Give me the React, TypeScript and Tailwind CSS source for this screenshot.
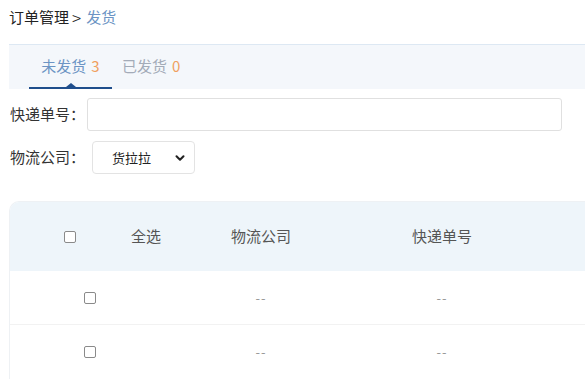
import { ChevronDown } from 'lucide-react';

const rows = [
  { id: 1, company: '--', trackingNo: '--' },
  { id: 2, company: '--', trackingNo: '--' },
];

function Box() {
  return <span className="block h-[12px] w-[12px] rounded-[2px] border border-[#8a8a8a] bg-white" />;
}

export default function App() {
  return (
    <div
      className="h-[379px] w-[585px] overflow-hidden bg-white text-[15px] text-[#333]"
      style={{ fontFamily: '"Microsoft YaHei", "Noto Sans CJK SC", sans-serif' }}
    >
      <div className="flex h-[35px] items-center pl-[9px]">
        <span className="text-[#222]">订单管理</span>
        <span className="ml-[3px] mr-[5px] text-[17px] font-light leading-none text-[#222]">&gt;</span>
        <span className="text-[#6c94c4]">发货</span>
      </div>

      <div className="ml-[9px] mt-[9px] flex h-[45px] items-stretch border-t border-[#dde8f3] bg-[#f4f7fb]">
        <div className="relative ml-[20px] flex w-[83px] items-center justify-center pb-[2px] text-[#6c94c4]">
          未发货<span className="ml-[5px] text-[#f0a060]">3</span>
          <span className="absolute bottom-0 left-0 h-[2px] w-full bg-[#1f4e8c]" />
          <span className="absolute bottom-[2px] left-1/2 h-0 w-0 -translate-x-1/2 border-x-[5px] border-b-[4px] border-x-transparent border-b-[#1f4e8c]" />
        </div>
        <div className="ml-[10px] flex items-center pb-[2px] text-[#a3abb8]">
          已发货<span className="ml-[5px] text-[#f0a060]">0</span>
        </div>
      </div>

      <div className="mt-[9px] flex items-center pl-[10px]">
        <span className="w-[77px]">快递单号：</span>
        <input className="h-[33px] w-[475px] rounded-[3px] border border-[#e0e0e0] bg-white outline-none" />
      </div>

      <div className="mt-[10px] flex items-center pl-[10px]">
        <span className="w-[82px]">物流公司：</span>
        <div className="flex h-[33px] w-[103px] items-center justify-between rounded-[4px] border border-[#e3e3e3] bg-white pl-[19px] pr-[7px] text-[13px] text-[#222]">
          货拉拉
          <ChevronDown className="h-[14px] w-[14px]" strokeWidth={3.5} color="#222" />
        </div>
      </div>

      <div className="ml-[9px] mt-[27px] overflow-hidden rounded-tl-[10px] border-l border-t border-[#eef1f4]">
        <div className="flex h-[69px] items-center bg-[#eef5fa] text-[#555]">
          <div className="flex w-[160px] items-center">
            <span className="ml-[54px]"><Box /></span>
            <span className="ml-[55px]">全选</span>
          </div>
          <div className="w-[182px] text-center">物流公司</div>
          <div className="w-[180px] text-center">快递单号</div>
        </div>
        {rows.map((r, i) => (
          <div
            key={r.id}
            className={`flex h-[54px] items-center text-[#999] ${i === 0 ? 'border-b border-[#f2f2f2]' : ''}`}
          >
            <div className="flex w-[160px] justify-center"><Box /></div>
            <div className="w-[182px] text-center text-[13px] tracking-[1px]">{r.company}</div>
            <div className="w-[180px] text-center text-[13px] tracking-[1px]">{r.trackingNo}</div>
          </div>
        ))}
      </div>
    </div>
  );
}
